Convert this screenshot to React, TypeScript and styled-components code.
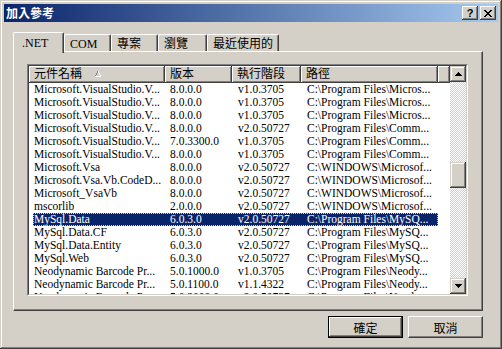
import React from 'react';
import styled, { createGlobalStyle } from 'styled-components';

const face = '#d4d0c8';
const shadow = '#808080';
const dark = '#404040';
const navy = '#0a246a';

const GlobalStyle = createGlobalStyle`
  html, body {
    margin: 0;
    padding: 0;
    background: ${face};
  }
  body {
    font-family: "Liberation Serif", "Noto Sans CJK TC", serif;
    font-size: 12px;
    color: #000;
  }
`;

const Window = styled.div`
  width: 502px;
  height: 349px;
  box-sizing: border-box;
  padding: 4px;
  background: ${face};
  box-shadow: inset -1px -1px ${dark}, inset 1px 1px ${face},
    inset -2px -2px ${shadow}, inset 2px 2px #fff;
  display: flex;
  flex-direction: column;
`;

const TitleBar = styled.div`
  height: 18px;
  display: flex;
  align-items: center;
  padding: 0 2px 0 2px;
  background: linear-gradient(to right, ${navy}, #a6caf0);
`;

const Title = styled.div`
  flex: 1;
  color: #fff;
  font-family: "Noto Sans CJK TC", sans-serif;
  font-weight: bold;
  font-size: 12px;
  line-height: 18px;
`;

const CaptionButton = styled.div<{ $gap?: number }>`
  width: 16px;
  height: 14px;
  box-sizing: border-box;
  margin-left: ${(p) => p.$gap ?? 0}px;
  background: ${face};
  box-shadow: inset -1px -1px ${dark}, inset 1px 1px #fff,
    inset -2px -2px ${shadow};
  display: flex;
  align-items: center;
  justify-content: center;
  font-family: "Liberation Sans", sans-serif;
  font-weight: bold;
  font-size: 11px;
  line-height: 14px;
`;

const Body = styled.div`
  flex: 1;
  display: flex;
  flex-direction: column;
  padding: 10px 15px 0 9px;
`;

const TabStrip = styled.div`
  height: 19px;
  display: flex;
  align-items: flex-end;
  position: relative;
  z-index: 1;
`;

const Tab = styled.div<{ $active?: boolean; $width: number }>`
  width: ${(p) => p.$width}px;
  height: ${(p) => (p.$active ? 21 : 17)}px;
  margin-bottom: ${(p) => (p.$active ? -2 : 0)}px;
  box-sizing: border-box;
  padding: ${(p) => (p.$active ? '3px 0 0 8px' : '2px 0 0 5px')};
  background: ${face};
  border-top: 1px solid #fff;
  border-left: 1px solid #fff;
  border-right: 1px solid ${dark};
  border-top-left-radius: 2px;
  border-top-right-radius: 2px;
  box-shadow: inset -1px 0 ${shadow};
  font-size: 12px;
  line-height: 14px;
  white-space: nowrap;
`;

const Panel = styled.div`
  height: 260px;
  box-sizing: border-box;
  padding: 12px 14px 14px 13px;
  border-top: 1px solid #fff;
  border-left: 1px solid #fff;
  border-right: 1px solid ${dark};
  border-bottom: 1px solid ${dark};
  box-shadow: inset -1px -1px ${shadow};
`;

const ListOuter = styled.div`
  height: 100%;
  box-sizing: border-box;
  border: 1px solid;
  border-color: ${shadow} #fff #fff ${shadow};
`;

const ListInner = styled.div`
  height: 100%;
  box-sizing: border-box;
  border: 1px solid;
  border-color: ${dark} ${face} ${face} ${dark};
  background: #fff;
  display: flex;
`;

const ListMain = styled.div`
  flex: 1;
  display: flex;
  flex-direction: column;
  overflow: hidden;
`;

const Header = styled.div`
  height: 17px;
  display: flex;
  flex-shrink: 0;
`;

const HeaderCell = styled.div<{ $width?: number }>`
  ${(p) => (p.$width ? `width: ${p.$width}px;` : 'flex: 1;')}
  box-sizing: border-box;
  padding-left: 5px;
  background: ${face};
  box-shadow: inset -1px -1px ${dark}, inset 1px 1px #fff,
    inset -2px -2px ${shadow};
  display: flex;
  align-items: center;
  font-size: 12px;
  line-height: 17px;
  white-space: nowrap;
`;

const SortArrow = styled.svg`
  margin-left: 12px;
  margin-top: -1px;
`;

const Rows = styled.div`
  flex: 1;
  overflow: hidden;
`;

const Row = styled.div<{ $selected?: boolean }>`
  height: 13px;
  width: 405px;
  margin-left: 4px;
  box-sizing: border-box;
  display: grid;
  grid-template-columns: 132px 67px 69px 137px;
  background: ${(p) => (p.$selected ? navy : 'transparent')};
  color: ${(p) => (p.$selected ? '#fff' : '#000')};
  outline: ${(p) => (p.$selected ? '1px dotted #e0d49a' : 'none')};
  outline-offset: -1px;
`;

const Cell = styled.div<{ $pad: number }>`
  padding-left: ${(p) => p.$pad}px;
  font-size: 11.5px;
  line-height: 13px;
  white-space: nowrap;
  overflow: hidden;
`;

const ScrollBar = styled.div`
  width: 16px;
  display: flex;
  flex-direction: column;
`;

const ScrollButton = styled.div`
  width: 16px;
  height: 16px;
  box-sizing: border-box;
  background: ${face};
  box-shadow: inset -1px -1px ${dark}, inset 1px 1px ${face},
    inset -2px -2px ${shadow}, inset 2px 2px #fff;
  display: flex;
  align-items: center;
  justify-content: center;
`;

const Track = styled.div`
  flex: 1;
  background-color: #fff;
  background-image: repeating-conic-gradient(${face} 0% 25%, #fff 0% 50%);
  background-size: 2px 2px;
`;

const Thumb = styled.div<{ $top: number; $height: number }>`
  margin-top: ${(p) => p.$top}px;
  height: ${(p) => p.$height}px;
  background: ${face};
  box-shadow: inset -1px -1px ${dark}, inset 1px 1px ${face},
    inset -2px -2px ${shadow}, inset 2px 2px #fff;
`;

const ButtonRow = styled.div`
  display: flex;
  justify-content: flex-end;
  gap: 5px;
  margin-top: 5px;
`;

const PushButton = styled.div<{ $default?: boolean }>`
  width: 75px;
  height: 22px;
  box-sizing: border-box;
  background: ${face};
  border: 1px solid ${(p) => (p.$default ? '#000' : 'transparent')};
  box-shadow: ${(p) =>
    p.$default
      ? `inset -1px -1px ${dark}, inset 1px 1px #fff, inset -2px -2px ${shadow}`
      : 'none'};
  display: flex;
  align-items: center;
  justify-content: center;
  font-family: "Noto Sans CJK TC", sans-serif;
  font-size: 12px;
  ${(p) =>
    !p.$default &&
    `border-color: #fff ${dark} ${dark} #fff; box-shadow: inset -1px -1px ${shadow};`}
`;

type Ref = [string, string, string, string];

const refs: Ref[] = [
  ['Microsoft.VisualStudio.V...', '8.0.0.0', 'v1.0.3705', 'C:\\Program Files\\Micros...'],
  ['Microsoft.VisualStudio.V...', '8.0.0.0', 'v1.0.3705', 'C:\\Program Files\\Micros...'],
  ['Microsoft.VisualStudio.V...', '8.0.0.0', 'v1.0.3705', 'C:\\Program Files\\Micros...'],
  ['Microsoft.VisualStudio.V...', '8.0.0.0', 'v2.0.50727', 'C:\\Program Files\\Comm...'],
  ['Microsoft.VisualStudio.V...', '7.0.3300.0', 'v1.0.3705', 'C:\\Program Files\\Comm...'],
  ['Microsoft.VisualStudio.V...', '8.0.0.0', 'v1.0.3705', 'C:\\Program Files\\Comm...'],
  ['Microsoft.Vsa', '8.0.0.0', 'v2.0.50727', 'C:\\WINDOWS\\Microsof...'],
  ['Microsoft.Vsa.Vb.CodeD...', '8.0.0.0', 'v2.0.50727', 'C:\\WINDOWS\\Microsof...'],
  ['Microsoft_VsaVb', '8.0.0.0', 'v2.0.50727', 'C:\\WINDOWS\\Microsof...'],
  ['mscorlib', '2.0.0.0', 'v2.0.50727', 'C:\\WINDOWS\\Microsof...'],
  ['MySql.Data', '6.0.3.0', 'v2.0.50727', 'C:\\Program Files\\MySQ...'],
  ['MySql.Data.CF', '6.0.3.0', 'v2.0.50727', 'C:\\Program Files\\MySQ...'],
  ['MySql.Data.Entity', '6.0.3.0', 'v2.0.50727', 'C:\\Program Files\\MySQ...'],
  ['MySql.Web', '6.0.3.0', 'v2.0.50727', 'C:\\Program Files\\MySQ...'],
  ['Neodynamic Barcode Pr...', '5.0.1000.0', 'v1.0.3705', 'C:\\Program Files\\Neody...'],
  ['Neodynamic Barcode Pr...', '5.0.1100.0', 'v1.1.4322', 'C:\\Program Files\\Neody...'],
  ['Neodynamic Barcode Pr...', '5.0.2000.0', 'v2.0.50727', 'C:\\Program Files\\Neody...'],
];

const tabs = [
  { label: '.NET', width: 51 },
  { label: 'COM', width: 47 },
  { label: '專案', width: 47 },
  { label: '瀏覽', width: 49 },
  { label: '最近使用的', width: 72 },
];

const Arrow: React.FC<{ down?: boolean }> = ({ down }) => (
  <svg width="7" height="4" viewBox="0 0 7 4" shapeRendering="crispEdges">
    <path
      d={down ? 'M0 0h7v1h-1v1h-1v1h-1v1h-1v-1h-1v-1h-1v-1h-1z' : 'M3 0h1v1h1v1h1v1h1v1h-7v-1h1v-1h1v-1h1z'}
      fill="#000"
    />
  </svg>
);

export default function App() {
  return (
    <>
      <GlobalStyle />
      <Window>
        <TitleBar>
          <Title>加入參考</Title>
          <CaptionButton>?</CaptionButton>
          <CaptionButton $gap={2}>
            <svg width="8" height="7" viewBox="0 0 8 7" shapeRendering="crispEdges">
              <path
                d="M0 0h2v1h1v1h2v-1h1v-1h2v1h-1v1h-1v1h-1v1h1v1h1v1h1v1h-2v-1h-1v-1h-2v1h-1v1h-2v-1h1v-1h1v-1h1v-1h-1v-1h-1v-1h-1z"
                fill="#000"
              />
            </svg>
          </CaptionButton>
        </TitleBar>

        <Body>
          <TabStrip>
            {tabs.map((t, i) => (
              <Tab key={t.label} $active={i === 0} $width={t.width}>
                {t.label}
              </Tab>
            ))}
          </TabStrip>

          <Panel>
            <ListOuter>
              <ListInner>
                <ListMain>
                  <Header>
                    <HeaderCell $width={136}>
                      元件名稱
                      <SortArrow width="8" height="6" viewBox="0 0 8 6" shapeRendering="crispEdges">
                        <path d="M3 0h1v2h-1v2h-1v2h-1v-2h1v-2h1z" fill={shadow} />
                        <path d="M4 0h1v2h1v2h1v2h-6v-1h5v-1h-1v-2h-1z" fill="#fff" />
                      </SortArrow>
                    </HeaderCell>
                    <HeaderCell $width={67}>版本</HeaderCell>
                    <HeaderCell $width={69}>執行階段</HeaderCell>
                    <HeaderCell $width={137}>路徑</HeaderCell>
                    <HeaderCell />
                  </Header>
                  <Rows>
                    {refs.map((r, i) => (
                      <Row key={i} $selected={i === 10}>
                        <Cell $pad={1}>{r[0]}</Cell>
                        <Cell $pad={5}>{r[1]}</Cell>
                        <Cell $pad={6}>{r[2]}</Cell>
                        <Cell $pad={6}>{r[3]}</Cell>
                      </Row>
                    ))}
                  </Rows>
                </ListMain>
                <ScrollBar>
                  <ScrollButton>
                    <Arrow />
                  </ScrollButton>
                  <Track>
                    <Thumb $top={80} $height={26} />
                  </Track>
                  <ScrollButton>
                    <Arrow down />
                  </ScrollButton>
                </ScrollBar>
              </ListInner>
            </ListOuter>
          </Panel>

          <ButtonRow>
            <PushButton $default>確定</PushButton>
            <PushButton>取消</PushButton>
          </ButtonRow>
        </Body>
      </Window>
    </>
  );
}
